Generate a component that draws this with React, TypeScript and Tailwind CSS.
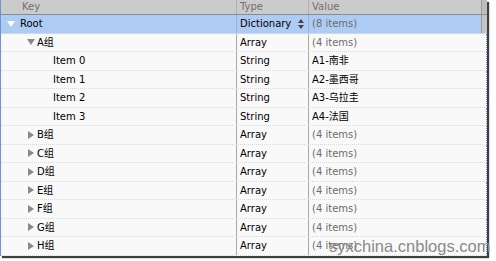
import React from "react";

type Row = {
    key: string;
    depth: number;
    arrow: "down" | "right" | "none";
    type: string;
    value: string;
    dim: boolean;
};

const rows: Row[] = [
    { key: "A组", depth: 1, arrow: "down", type: "Array", value: "(4 items)", dim: true },
    { key: "Item 0", depth: 2, arrow: "none", type: "String", value: "A1-南非", dim: false },
    { key: "Item 1", depth: 2, arrow: "none", type: "String", value: "A2-墨西哥", dim: false },
    { key: "Item 2", depth: 2, arrow: "none", type: "String", value: "A3-乌拉圭", dim: false },
    { key: "Item 3", depth: 2, arrow: "none", type: "String", value: "A4-法国", dim: false },
    { key: "B组", depth: 1, arrow: "right", type: "Array", value: "(4 items)", dim: true },
    { key: "C组", depth: 1, arrow: "right", type: "Array", value: "(4 items)", dim: true },
    { key: "D组", depth: 1, arrow: "right", type: "Array", value: "(4 items)", dim: true },
    { key: "E组", depth: 1, arrow: "right", type: "Array", value: "(4 items)", dim: true },
    { key: "F组", depth: 1, arrow: "right", type: "Array", value: "(4 items)", dim: true },
    { key: "G组", depth: 1, arrow: "right", type: "Array", value: "(4 items)", dim: true },
    { key: "H组", depth: 1, arrow: "right", type: "Array", value: "(4 items)", dim: true },
];

function Arrow({ dir, color }: { dir: "down" | "right"; color: string }) {
    return (
        <svg width="8" height="8" viewBox="0 0 8 8" className="shrink-0">
            {dir === "down" ? <path d="M0 1 L8 1 L4 7 Z" fill={color} /> : <path d="M1 0 L7 4 L1 8 Z" fill={color} />}
        </svg>
    );
}

export default function App() {
    const font = { fontFamily: '"DejaVu Sans", "Noto Sans CJK SC", sans-serif' };

    return (
        <div className="w-[496px] h-[261px] bg-white overflow-hidden relative" style={font}>
            <div className="w-[487px] h-[256px] bg-[#f9f9f9] border-l border-[#6b93d6] shadow-[2px_2px_1px_rgba(0,0,0,0.75)] flex flex-col text-[10px] text-black">
                {/* header */}
                <div className="flex h-[15px] bg-[#cbcbcb] border-b border-[#8c8c8c] text-[#707070] leading-[14px]">
                    <div className="w-[236px] pl-[21px] border-r border-[#b0b0b0]">Key</div>
                    <div className="w-[72px] pl-[3px] border-r border-[#b0b0b0]">Type</div>
                    <div className="flex-1 pl-[3px]">Value</div>
                    <div className="w-[6px] bg-[#bdbdbd] border-l border-[#9a9a9a]" />
                </div>

                {/* root row */}
                <div className="flex h-[18.5px] items-center bg-[#aecbf4] border-b border-[#c9d9f0]">
                    <div className="w-[236px] h-full flex items-center pl-[6px] gap-[5px] border-r border-[#9ab0cf]">
                        <Arrow dir="down" color="#ffffff" />
                        <span>Root</span>
                    </div>
                    <div className="w-[72px] h-full flex items-center pl-[3px] border-r border-[#9ab0cf]">
                        <span>Dictionary</span>
                        <svg width="6" height="10" viewBox="0 0 6 10" className="ml-[7px]">
                            <path d="M0 4 L3 0 L6 4 Z" fill="#444" />
                            <path d="M0 6 L3 10 L6 6 Z" fill="#444" />
                        </svg>
                    </div>
                    <div className="flex-1 h-full flex items-center pl-[3px] text-[#6c6c6c]">(8 items)</div>
                    <div className="w-[6px] h-full bg-[#c4c4c4] border-l border-[#9a9a9a]" />
                </div>

                {rows.map((r) => (
                    <div key={r.key} className="flex h-[18.5px] items-center border-b border-dotted border-[#dadada] border-r border-r-[#6b93d6]">
                        <div
                            className={`w-[236px] h-full flex items-center border-r border-r-[#a8a8a8] ${
                                r.depth === 1 ? "pl-[26px] gap-[2px]" : "pl-[52px]"
                            }`}
                        >
                            {r.arrow !== "none" && <Arrow dir={r.arrow} color="#8a8a8a" />}
                            <span>{r.key}</span>
                        </div>
                        <div className="w-[72px] h-full flex items-center pl-[3px] border-r border-r-[#a8a8a8]">{r.type}</div>
                        <div className={`flex-1 h-full flex items-center pl-[3px] ${r.dim ? "text-[#6c6c6c]" : ""}`}>{r.value}</div>
                    </div>
                ))}
            </div>

            {/* watermark */}
            <div className="absolute left-[329px] top-[238px] text-[16.5px] leading-[17px] text-[#8a8a8a] pointer-events-none" style={{ fontFamily: '"Liberation Sans", sans-serif' }}>
                syxchina.cnblogs.com
            </div>
        </div>
    );
}
